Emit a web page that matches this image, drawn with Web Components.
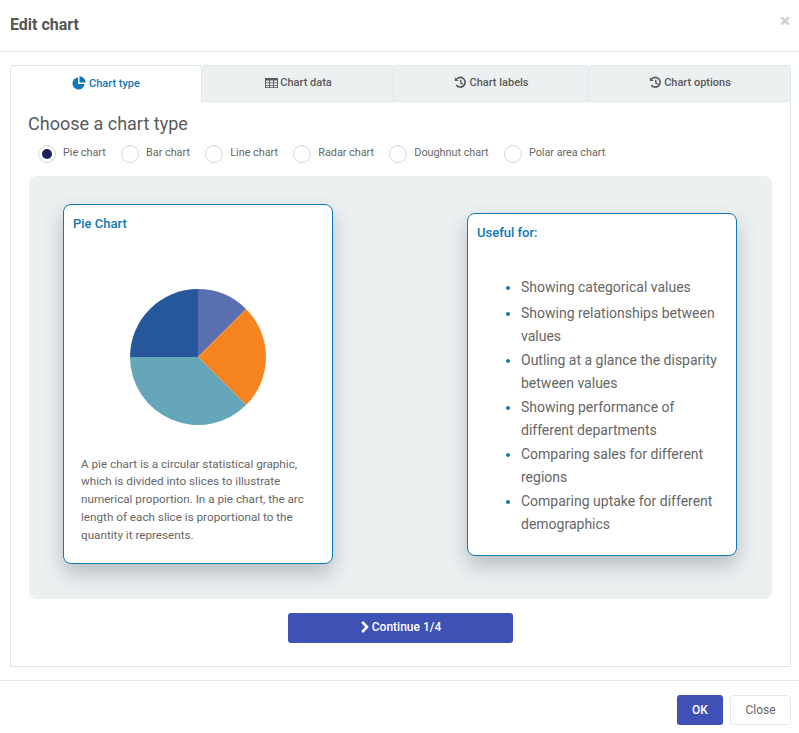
<!DOCTYPE html>
<html>
<head>
<meta charset="utf-8">
<title>Edit chart</title>
<style>
  html, body { margin: 0; background: #fff; }
  body { font-family: Roboto, "Liberation Sans", sans-serif; color: #555; }
</style>
</head>
<body>
<edit-chart-dialog>
  <chart-tabs>
    <h-title>Choose a chart type</h-title>
    <chart-radios></chart-radios>
    <chart-preview>
      <info-card heading="Pie Chart" slot="left">
        <pie-graphic></pie-graphic>
        <p class="desc">A pie chart is a circular statistical graphic, which is divided into slices to illustrate numerical proportion. In a pie chart, the arc length of each slice is proportional to the quantity it represents.</p>
      </info-card>
      <info-card heading="Useful for:" slot="right">
        <useful-list></useful-list>
      </info-card>
    </chart-preview>
    <continue-button>Continue 1/4</continue-button>
  </chart-tabs>
</edit-chart-dialog>

<script>
const ICONS = {
  pie: `<svg viewBox="0 0 16 16" width="14" height="14"><path fill="currentColor" d="M7 1.6A6.9 6.9 0 1 0 14.3 9H7z"/><path fill="currentColor" d="M8.6.4V7.4h7A7 7 0 0 0 8.6.4z"/></svg>`,
  table: `<svg class="table" viewBox="0 0 14 12" width="13" height="12"><path fill="currentColor" fill-rule="evenodd" d="M0 .5h14v11H0zM1 3.4v2h3.3v-2zm4.3 0v2h3.4v-2zm4.4 0v2H13v-2zM1 6.4v1.9h3.3V6.4zm4.3 0v1.9h3.4V6.4zm4.4 0v1.9H13V6.4zM1 9.3v1.2h3.3V9.3zm4.3 0v1.2h3.4V9.3zm4.4 0v1.2H13V9.3z"/></svg>`,
  history: `<svg class="history" viewBox="0 0 14 14" width="13" height="13"><path fill="none" stroke="currentColor" stroke-width="1.8" d="M3 3.2A5.2 5.2 0 1 1 2.5 9.6"/><path fill="currentColor" d="M.9 1.3v4.2h4.2z"/><path fill="none" stroke="currentColor" stroke-width="1.5" d="M7.3 4v3.4l2.3 1.4"/></svg>`,
  chevron: `<svg viewBox="0 0 10 12" width="10" height="12"><path fill="none" stroke="currentColor" stroke-width="2.6" d="M2.2 1 7 6l-4.8 5"/></svg>`
};

class EditChartDialog extends HTMLElement {
  constructor() {
    super();
    this.attachShadow({ mode: "open" });
  }

  static get styles() {
    return /* css */`
      :host {
        display: flex;
        flex-direction: column;
        height: 733px;
        width: 799px;
        overflow: hidden;
        font-family: Roboto, "Liberation Sans", sans-serif;
      }

      header {
        border-bottom: 1px solid #e2e8ea;
        display: flex;
        align-items: center;
        justify-content: space-between;
        padding: 0 9px 3px 10px;
        height: 48px;
      }

      h1 {
        margin: 0;
        font-size: 16px;
        font-weight: 700;
        color: #555;
      }

      .x {
        font-size: 19px;
        font-weight: 700;
        color: #cfcfcf;
        line-height: 1;
        margin-top: -8px;
      }

      main {
        padding: 13px 8px 13px 10px;
      }

      footer {
        border-top: 1px solid #e2e8ea;
        padding: 14px 8px 0 0;
        display: flex;
        justify-content: flex-end;
        gap: 7px;
      }

      button {
        font: 500 12px Roboto, "Liberation Sans", sans-serif;
        height: 30px;
        border-radius: 3px;
        padding: 0;
      }

      .ok {
        width: 46px;
        background: #3f51b5;
        border: 0;
        color: #fff;
      }

      .close {
        width: 61px;
        background: #fff;
        border: 1px solid #e6eaec;
        color: #666;
        font-weight: 400;
      }
    `;
  }

  connectedCallback() {
    this.shadowRoot.innerHTML = this.render();
  }

  render() {
    return /* html */`
      <style>${EditChartDialog.styles}</style>
      <header>
        <h1>Edit chart</h1>
        <span class="x">×</span>
      </header>
      <main><slot></slot></main>
      <footer>
        <button class="ok">OK</button>
        <button class="close">Close</button>
      </footer>
    `;
  }
}

class ChartTabs extends HTMLElement {
  constructor() {
    super();
    this.attachShadow({ mode: "open" });
  }

  static get styles() {
    return /* css */`
      :host {
        display: block;
      }

      nav {
        display: grid;
        grid-template-columns: 192px 192px 195px 202px;
        height: 37px;
      }

      a {
        display: flex;
        align-items: center;
        justify-content: center;
        gap: 3px;
        box-sizing: border-box;
        padding-bottom: 2px;
        background: #ecf0f1;
        border: 1px solid #dde6e9;
        border-left-width: 0;
        border-radius: 4px 4px 0 0;
        font-size: 11px;
        font-weight: 500;
        color: #5a5a5a;
      }

      a svg {
        display: block;
      }

      svg.table {
        margin: 0 -1px 0 2px;
      }

      svg.history {
        margin: 0 -1px 0 1px;
      }

      a.active {
        background: #fff;
        color: #0f78b5;
        border-bottom: 0;
        border-left-width: 1px;
      }

      section {
        box-sizing: border-box;
        height: 565px;
        border: 1px solid #dde6e9;
        border-top: 0;
        padding: 11px 18px 0 18px;
      }
    `;
  }

  connectedCallback() {
    this.shadowRoot.innerHTML = this.render();
  }

  render() {
    return /* html */`
      <style>${ChartTabs.styles}</style>
      <nav>
        <a class="active">${ICONS.pie}Chart type</a>
        <a>${ICONS.table}Chart data</a>
        <a>${ICONS.history}Chart labels</a>
        <a>${ICONS.history}Chart options</a>
      </nav>
      <section><slot></slot></section>
    `;
  }
}

class HTitle extends HTMLElement {
  constructor() {
    super();
    this.attachShadow({ mode: "open" });
  }

  connectedCallback() {
    this.shadowRoot.innerHTML = /* html */`
      <style>
        :host { display: block; margin-left: -1px; font-size: 18px; line-height: 21px; color: #5a5a5a; }
      </style>
      <slot></slot>
    `;
  }
}

class ChartRadios extends HTMLElement {
  constructor() {
    super();
    this.attachShadow({ mode: "open" });
  }

  static get styles() {
    return /* css */`
      :host {
        display: flex;
        margin: 11px 0 13px 9px;
        height: 18px;
        gap: 15.3px;
        font-size: 10.8px;
        color: #666;
      }

      label {
        display: flex;
        align-items: center;
        gap: 7px;
      }

      i {
        box-sizing: border-box;
        width: 18px;
        height: 18px;
        border-radius: 50%;
        border: 1px solid #d3d8da;
        background: #fff;
        display: flex;
        align-items: center;
        justify-content: center;
      }

      .on::after {
        content: "";
        width: 10px;
        height: 10px;
        border-radius: 50%;
        background: #1a2360;
      }

      span {
        position: relative;
        top: -2px;
      }
    `;
  }

  connectedCallback() {
    const names = ["Pie chart", "Bar chart", "Line chart", "Radar chart", "Doughnut chart", "Polar area chart"];
    this.shadowRoot.innerHTML = /* html */`
      <style>${ChartRadios.styles}</style>
      ${names.map((n, idx) => `<label><i class="${idx === 0 ? "on" : ""}"></i><span>${n}</span></label>`).join("")}
    `;
  }
}

class ChartPreview extends HTMLElement {
  constructor() {
    super();
    this.attachShadow({ mode: "open" });
  }

  connectedCallback() {
    this.shadowRoot.innerHTML = /* html */`
      <style>
        :host {
          display: flex;
          box-sizing: border-box;
          height: 423px;
          margin-left: 0;
          width: 743px;
          padding: 28px 35px 35px 34px;
          align-items: center;
          justify-content: space-between;
          background: #ecf0f1;
          border-radius: 8px;
        }
      </style>
      <slot name="left"></slot>
      <slot name="right"></slot>
    `;
  }
}

class InfoCard extends HTMLElement {
  constructor() {
    super();
    this.attachShadow({ mode: "open" });
  }

  static get styles() {
    return /* css */`
      :host {
        display: block;
        box-sizing: border-box;
        width: 270px;
        padding: 0 9px;
        background: #fff;
        border: 1px solid #0f78b5;
        border-radius: 8px;
        box-shadow: 0 10px 20px rgba(60, 75, 90, .3);
      }

      h3 {
        margin: 0;
        padding-top: 11px;
        font-size: 13px;
        line-height: 15px;
        font-weight: 500;
        color: #0f78b5;
      }
    `;
  }

  connectedCallback() {
    this.shadowRoot.innerHTML = /* html */`
      <style>${InfoCard.styles}</style>
      <h3>${this.getAttribute("heading")}</h3>
      <slot></slot>
    `;
  }
}

class PieGraphic extends HTMLElement {
  constructor() {
    super();
    this.attachShadow({ mode: "open" });
  }

  connectedCallback() {
    // slices clockwise from the top, radius 68 around (68, 68)
    const r = 68, d = r * Math.SQRT1_2;
    const pts = {
      top: [r, 0],
      ne: [r + d, r - d],
      se: [r + d, r + d],
      w: [0, r]
    };
    const slice = (a, b, big, fill) =>
      `<path fill="${fill}" d="M${r} ${r}L${a[0]} ${a[1]}A${r} ${r} 0 ${big} 1 ${b[0]} ${b[1]}Z"/>`;
    this.shadowRoot.innerHTML = /* html */`
      <style>
        :host { display: flex; justify-content: center; padding: 58px 0 31px; }
        svg { display: block; }
      </style>
      <svg width="136" height="136" viewBox="0 0 136 136">
        ${slice(pts.top, pts.ne, 0, "#5a6fb0")}
        ${slice(pts.ne, pts.se, 0, "#f68420")}
        ${slice(pts.se, pts.w, 0, "#65a6bb")}
        ${slice(pts.w, pts.top, 0, "#27579b")}
      </svg>
    `;
  }
}

class UsefulList extends HTMLElement {
  constructor() {
    super();
    this.attachShadow({ mode: "open" });
  }

  static get styles() {
    return /* css */`
      :host {
        display: block;
        padding: 36px 0 18px;
      }

      ul {
        margin: 0;
        padding: 0 0 0 44px;
        font-size: 14px;
        line-height: 23px;
        color: #666;
      }

      li {
        margin-bottom: 1px;
      }

      li:first-child {
        margin-bottom: 3px;
      }

      li::marker {
        color: #0f78b5;
      }
    `;
  }

  connectedCallback() {
    const items = [
      "Showing categorical values",
      "Showing relationships between values",
      "Outling at a glance the disparity between values",
      "Showing performance of different departments",
      "Comparing sales for different regions",
      "Comparing uptake for different demographics"
    ];
    this.shadowRoot.innerHTML = /* html */`
      <style>${UsefulList.styles}</style>
      <ul>${items.map((t) => `<li>${t}</li>`).join("")}</ul>
    `;
  }
}

class ContinueButton extends HTMLElement {
  constructor() {
    super();
    this.attachShadow({ mode: "open" });
  }

  connectedCallback() {
    this.shadowRoot.innerHTML = /* html */`
      <style>
        :host {
          display: flex;
          align-items: center;
          justify-content: center;
          gap: 2px;
          box-sizing: border-box;
          width: 225px;
          height: 30px;
          padding-bottom: 2px;
          margin: 14px auto 0;
          background: #3f51b5;
          border-radius: 3px;
          color: #fff;
          font-size: 12px;
          font-weight: 500;
        }
        svg { display: block; }
      </style>
      ${ICONS.chevron}<slot></slot>
    `;
  }
}

customElements.define("edit-chart-dialog", EditChartDialog);
customElements.define("chart-tabs", ChartTabs);
customElements.define("h-title", HTitle);
customElements.define("chart-radios", ChartRadios);
customElements.define("chart-preview", ChartPreview);
customElements.define("info-card", InfoCard);
customElements.define("pie-graphic", PieGraphic);
customElements.define("useful-list", UsefulList);
customElements.define("continue-button", ContinueButton);

// description paragraph is light DOM, so style it here
document.querySelector(".desc").style.cssText =
  "margin:0 0 19px;padding:0 8px;font-size:11.7px;line-height:17.75px;color:#666";
</script>
</body>
</html>
